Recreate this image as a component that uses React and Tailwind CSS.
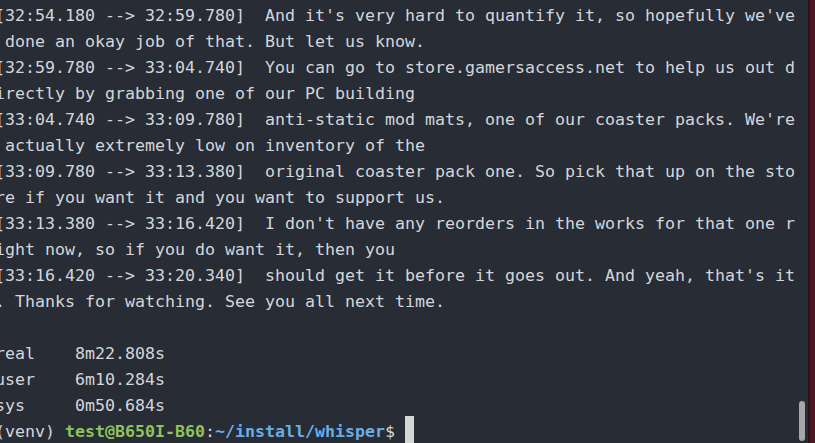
const lines = [
  "[32:54.180 --> 32:59.780]  And it's very hard to quantify it, so hopefully we've",
  " done an okay job of that. But let us know.",
  "[32:59.780 --> 33:04.740]  You can go to store.gamersaccess.net to help us out d",
  "irectly by grabbing one of our PC building",
  "[33:04.740 --> 33:09.780]  anti-static mod mats, one of our coaster packs. We're",
  " actually extremely low on inventory of the",
  "[33:09.780 --> 33:13.380]  original coaster pack one. So pick that up on the sto",
  "re if you want it and you want to support us.",
  "[33:13.380 --> 33:16.420]  I don't have any reorders in the works for that one r",
  "ight now, so if you do want it, then you",
  "[33:16.420 --> 33:20.340]  should get it before it goes out. And yeah, that's it",
  ". Thanks for watching. See you all next time.",
  "",
  "real    8m22.808s",
  "user    6m10.284s",
  "sys     0m50.684s",
];

const Terminal = () => {
  return (
    <div className="relative flex-1 bg-[#282c34] overflow-hidden">
      <div className="ml-[-5px] pt-[3px] font-['DejaVu_Sans_Mono',monospace] text-[16.61px] leading-[26px] text-[#d3d6dc] whitespace-pre">
        {lines.map((line, i) => (
          <div key={i} className="h-[26px]">{line}</div>
        ))}
        <div className="h-[26px]">
          <span>(venv) </span>
          <span className="font-bold text-[#8fc35f]">test@B650I-B60</span>
          <span>:</span>
          <span className="font-bold text-[#68aeea]">~/install/whisper</span>
          <span>$ </span>
          <span className="inline-block w-[9px] h-[28px] align-top -translate-y-[3px] bg-[#d6d6d6]"></span>
        </div>
      </div>

      {/* scrollbar thumb */}
      <div className="absolute right-[3px] top-[401px] w-[6px] h-[40px] rounded-full bg-[#a6a6a6]"></div>
    </div>
  );
};

export default function App() {
  return (
    <div className="flex w-[815px] h-[443px] overflow-hidden">
      <Terminal />
      <div className="w-[7px] border-l-2 border-[#21161a] bg-[#4d1723]"></div>
    </div>
  );
}
